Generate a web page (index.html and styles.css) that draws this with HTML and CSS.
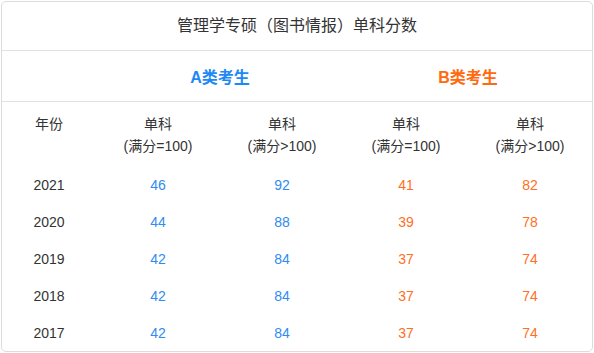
FILE: index.html
```html
<!DOCTYPE html>
<html lang="zh-CN">
<head>
<meta charset="utf-8">
<title>管理学专硕（图书情报）单科分数</title>
<link rel="stylesheet" href="styles.css">
</head>
<body>
<div class="card">
  <div class="title">管理学专硕（图书情报）单科分数</div>
  <div class="groups">
    <div class="g-empty"></div>
    <div class="g g-a">A类考生</div>
    <div class="g g-b">B类考生</div>
  </div>
  <div class="grid">
    <div class="th">年份</div>
    <div class="th">单科<br>(满分=100)</div>
    <div class="th">单科<br>(满分&gt;100)</div>
    <div class="th">单科<br>(满分=100)</div>
    <div class="th">单科<br>(满分&gt;100)</div>

    <div class="td">2021</div><div class="td a">46</div><div class="td a">92</div><div class="td b">41</div><div class="td b">82</div>
    <div class="td">2020</div><div class="td a">44</div><div class="td a">88</div><div class="td b">39</div><div class="td b">78</div>
    <div class="td">2019</div><div class="td a">42</div><div class="td a">84</div><div class="td b">37</div><div class="td b">74</div>
    <div class="td">2018</div><div class="td a">42</div><div class="td a">84</div><div class="td b">37</div><div class="td b">74</div>
    <div class="td">2017</div><div class="td a">42</div><div class="td a">84</div><div class="td b">37</div><div class="td b">74</div>
  </div>
</div>
</body>
</html>
```

FILE: styles.css
```css
html, body {
  margin: 0;
  padding: 0;
  background: #fff;
}
body {
  padding: 1px;
  font-family: "Liberation Sans", Arial, "Noto Sans CJK SC", sans-serif;
  color: #333;
}
.card {
  width: 590px;
  height: 349px;
  border: 1px solid #dcdcdc;
  border-radius: 5px;
  overflow: hidden;
}
.title {
  height: 48px;
  line-height: 48px;
  border-bottom: 1px solid #e2e2e2;
  text-align: center;
  font-size: 16px;
  color: #333;
}
.groups {
  display: grid;
  grid-template-columns: 94px 248px 248px;
  height: 50px;
  border-bottom: 1px solid #e2e2e2;
}
.g {
  display: flex;
  align-items: center;
  justify-content: center;
  font-size: 16px;
  font-weight: bold;
}
.g-a { color: #1e88f5; }
.g-b { color: #ff6a0d; }
.grid {
  display: grid;
  grid-template-columns: 94px repeat(4, 124px);
  grid-template-rows: 64px repeat(5, 37px);
}
.th, .td {
  display: flex;
  align-items: center;
  justify-content: center;
  text-align: center;
  font-size: 14px;
}
.th {
  align-items: flex-start;
  line-height: 22px;
  padding-top: 11px;
}
.td { color: #333; }
.td.a { color: #2f8cf0; }
.td.b { color: #ff6f23; }
```
